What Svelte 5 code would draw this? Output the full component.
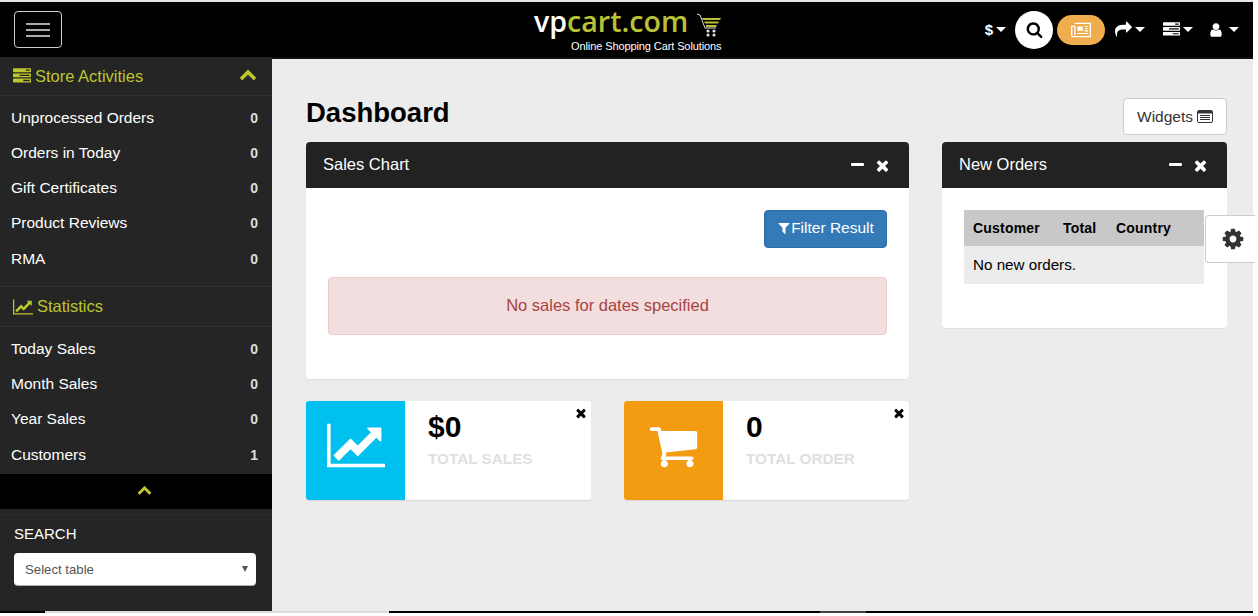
<script lang="ts">
  const activities = [
    { label: 'Unprocessed Orders', value: 0 },
    { label: 'Orders in Today', value: 0 },
    { label: 'Gift Certificates', value: 0 },
    { label: 'Product Reviews', value: 0 },
    { label: 'RMA', value: 0 }
  ];
  const statistics = [
    { label: 'Today Sales', value: 0 },
    { label: 'Month Sales', value: 0 },
    { label: 'Year Sales', value: 0 },
    { label: 'Customers', value: 1 }
  ];

  const tasks = 'M1024 1408h640v-128h-640v128zm-384-512h1024v-128h-1024v128zm640-512h384v-128h-384v128zm512 832v256q0 26-19 45t-45 19h-1664q-26 0-45-19t-19-45v-256q0-26 19-45t45-19h1664q26 0 45 19t19 45zm0-512v256q0 26-19 45t-45 19h-1664q-26 0-45-19t-19-45v-256q0-26 19-45t45-19h1664q26 0 45 19t19 45zm0-512v256q0 26-19 45t-45 19h-1664q-26 0-45-19t-19-45v-256q0-26 19-45t45-19h1664q26 0 45 19t19 45z';
  const chevron = 'M1683 1331l-166 165q-19 19-45 19t-45-19l-531-531-531 531q-19 19-45 19t-45-19l-166-165q-19-19-19-45.500t19-45.500l742-741q19-19 45-19t45 19l742 741q19 19 19 45.500t-19 45.500z';
  const times = 'M1490 1322q0 40-28 68l-136 136q-28 28-68 28t-68-28l-294-294-294 294q-28 28-68 28t-68-28l-136-136q-28-28-28-68t28-68l294-294-294-294q-28-28-28-68t28-68l136-136q28-28 68-28t68 28l294 294 294-294q28-28 68-28t68 28l136 136q28 28 28 68t-28 68l-294 294 294 294q28 28 28 68z';
  const lineChart = 'M2048 1536v128h-2048v-1536h128v1408h1920zm-128-1248v435q0 21-19.500 29.500t-35.500-7.500l-121-121-633 633q-10 10-23 10t-23-10l-233-233-416 416-192-192 585-585q10-10 23-10t23 10l233 233 464-464-121-121q-16-16-7.500-35.500t29.500-19.500h435q14 0 23 9t9 23z';
  const cart = 'M704 1536q0 52-38 90t-90 38-90-38-38-90 38-90 90-38 90 38 38 90zm896 0q0 52-38 90t-90 38-90-38-38-90 38-90 90-38 90 38 38 90zm128-1088v512q0 24-16.500 42.500t-40.500 21.500l-1044 122q13 60 13 70 0 16-24 64h920q26 0 45 19t19 45-19 45-45 19h-1024q-26 0-45-19t-19-45q0-11 8-31.500t16-36 21.500-40 15.500-29.500l-177-823h-204q-26 0-45-19t-19-45 19-45 45-19h256q16 0 28.500 6.500t19.500 15.500 13 24.500 8 26 5.500 29.500 4.500 26h1201q26 0 45 19t19 45z';
  const search = 'M1216 832q0-185-131.500-316.500t-316.500-131.500-316.500 131.500-131.500 316.500 131.500 316.500 316.500 131.500 316.500-131.500 131.500-316.500zm512 832q0 52-38 90t-90 38q-54 0-90-38l-343-342q-179 124-399 124-143 0-273.500-55.500t-225-150-150-225-55.500-273.500 55.500-273.500 150-225 225-150 273.500-55.500 273.500 55.500 225 150 150 225 55.500 273.500q0 220-124 399l343 343q37 37 37 90z';
  const cog = 'M1152 896q0-106-75-181t-181-75-181 75-75 181 75 181 181 75 181-75 75-181zm512-109v222q0 12-8 23t-20 13l-185 28q-19 54-39 91 35 50 107 138 10 12 10 25t-9 23q-27 37-99 108t-94 71q-12 0-26-9l-138-108q-44 23-91 38-16 136-29 186-7 28-36 28h-222q-14 0-24.500-8.500t-11.500-21.500l-28-184q-49-16-90-37l-141 107q-10 9-25 9-14 0-25-11-126-114-165-168-7-10-7-23 0-12 8-23 15-21 51-66.500t54-70.500q-27-50-41-99l-183-27q-13-2-21-12.500t-8-23.500v-222q0-12 8-23t19-13l186-28q14-46 39-92-40-57-107-138-10-12-10-24 0-10 9-23 26-36 98.500-107.500t94.500-71.500q13 0 26 10l138 107q44-23 91-38 16-136 29-186 7-28 36-28h222q14 0 24.500 8.500t11.500 21.500l28 184q49 16 90 37l142-107q9-9 24-9 13 0 25 10 129 119 165 170 7 8 7 22 0 12-8 23-15 21-51 66.500t-54 70.500q26 50 41 98l183 28q13 2 21 12.500t8 23.500z';
  const share = 'M1792 640q0 26-19 45l-512 512q-19 19-45 19t-45-19-19-45v-256h-224q-98 0-175.500 6t-154 21.500-133 42.500-105.500 69.500-80 101-48.500 138.500-17.500 181q0 55 5 123 0 6 2.500 23.500t2.500 26.500q0 15-8.500 25t-23.500 10q-16 0-28-17-7-9-13-22t-13.500-30-10.500-24q-127-285-127-451 0-199 53-333 162-403 875-403h224v-256q0-26 19-45t45-19 45 19l512 512q19 19 19 45z';
  const user = 'M1536 1399q0 109-62.500 187t-150.500 78h-854q-88 0-150.500-78t-62.500-187q0-85 8.500-160.500t31.500-152 58.500-131 94-89 134.500-34.500q131 128 313 128t313-128q76 0 134.500 34.500t94 89 58.500 131 31.500 152 8.500 160.500zm-256-887q0 159-112.500 271.500t-271.500 112.500-271.500-112.500-112.500-271.500 112.500-271.500 271.500-112.500 271.500 112.500 112.500 271.500z';
  const filter = 'M1595 295q17 41-14 70l-493 493v742q0 42-39 59-13 5-25 5-27 0-45-19l-256-256q-19-19-19-45v-486l-493-493q-31-29-14-70 17-39 59-39h1280q42 0 59 39z';
</script>

<div class="page">
  <header class="topbar">
    <button class="burger" aria-label="Menu"><span></span><span></span><span></span></button>

    <div class="logo">
      <div class="logo-top">
        <span class="logo-name"><span class="vp">vp</span>cart.com</span>
        <svg class="logo-cart" viewBox="0 0 26 24" width="26" height="24" fill="none">
          <path d="M1 1l3 1 5 13h11" stroke="#ddd" stroke-width="1" />
          <path d="M6 5h19l-1 2H7zM8 8.500h15l-1 2H9zM10 12h11l-1 2H10z" fill="#b9c232" />
          <circle cx="12" cy="18" r="1.600" fill="#ddd" />
          <circle cx="18" cy="18" r="1.600" fill="#ddd" />
          <circle cx="12" cy="22" r="1.600" fill="#ddd" />
          <circle cx="18" cy="22" r="1.600" fill="#ddd" />
        </svg>
      </div>
      <div class="tagline">Online Shopping Cart Solutions</div>
    </div>

    <nav class="tools">
      <span class="tool dollar">$<i class="caret"></i></span>
      <button class="round-search" aria-label="Search">
        <svg viewBox="0 0 1792 1792" width="17" height="17"><path d={search} fill="#000" /></svg>
      </button>
      <button class="news" aria-label="News">
        <svg viewBox="0 0 24 18" width="22" height="16" fill="none" stroke="#fff" stroke-width="1.500">
          <path d="M5 1.500h17.500v15H3A1.500 1.500 0 0 1 1.500 15V5H5v10" />
          <rect x="8" y="5" width="6" height="5" fill="#fff" stroke="none" />
          <path d="M16 5h4M16 7.500h4M16 10h4M8 13h12" stroke-width="1.200" />
        </svg>
      </button>
      <span class="tool share"><svg viewBox="0 0 1792 1792" width="17" height="17"><path d={share} fill="#fff" /></svg><i class="caret"></i></span>
      <span class="tool tasks"><svg viewBox="0 0 1792 1792" width="17" height="17"><path d={tasks} fill="#fff" /></svg><i class="caret"></i></span>
      <span class="tool user"><svg viewBox="0 0 1792 1792" width="16" height="16"><path d={user} fill="#fff" /></svg><i class="caret"></i></span>
    </nav>
  </header>

  <div class="body">
    <aside class="sidebar">
      <div class="side-head first">
        <svg viewBox="0 0 1792 1792" width="18" height="18"><path d={tasks} /></svg>
        <span>Store Activities</span>
        <svg class="chev" viewBox="0 0 1792 1792" width="18" height="18"><path d={chevron} /></svg>
      </div>
      <ul class="side-list">
        {#each activities as row}
          <li><span>{row.label}</span><b>{row.value}</b></li>
        {/each}
      </ul>

      <div class="side-head second">
        <svg viewBox="0 0 2048 1792" width="20" height="18"><path d={lineChart} /></svg>
        <span>Statistics</span>
      </div>
      <ul class="side-list">
        {#each statistics as row}
          <li><span>{row.label}</span><b>{row.value}</b></li>
        {/each}
      </ul>

      <div class="collapse">
        <svg viewBox="0 0 1792 1792" width="15" height="15"><path d={chevron} /></svg>
      </div>

      <div class="side-search">
        <div class="search-label">SEARCH</div>
        <div class="select-wrap">
          <select>
            <option>Select table</option>
          </select>
        </div>
      </div>
    </aside>

    <main class="main">
      <div class="title-row">
        <h1>Dashboard</h1>
        <button class="widgets">Widgets
          <svg viewBox="0 0 16 13" width="16" height="13">
            <rect x=".5" y=".5" width="15" height="12" rx="1.500" fill="none" stroke="#333" />
            <rect x="1" y="1" width="14" height="2.500" fill="#333" />
            <path d="M3 5.500h10M3 7.500h10M3 9.500h10" stroke="#333" stroke-width="1.100" />
          </svg>
        </button>
      </div>

      <div class="columns">
        <div class="left-col">
          <section class="panel">
            <div class="panel-head">
              <span>Sales Chart</span>
              <div class="panel-tools">
                <i class="minus"></i>
                <svg viewBox="0 0 1792 1792" width="17" height="17"><path d={times} fill="#fff" /></svg>
              </div>
            </div>
            <div class="sales-body">
              <div class="filter-row">
                <button class="filter"><svg viewBox="0 0 1792 1792" width="14" height="14"><path d={filter} fill="#fff" /></svg>Filter Result</button>
              </div>
              <div class="alert">No sales for dates specified</div>
            </div>
          </section>

          <div class="stats">
            <div class="stat">
              <div class="stat-icon blue">
                <svg viewBox="0 0 2048 1792" width="58" height="51"><path d={lineChart} fill="#fff" /></svg>
              </div>
              <div class="stat-text">
                <div class="stat-value">$0</div>
                <div class="stat-label">TOTAL SALES</div>
              </div>
              <svg class="stat-close" viewBox="0 0 1792 1792" width="14" height="14"><path d={times} fill="#000" /></svg>
            </div>
            <div class="stat">
              <div class="stat-icon orange">
                <svg viewBox="0 0 1792 1792" width="51" height="51"><path d={cart} fill="#fff" /></svg>
              </div>
              <div class="stat-text">
                <div class="stat-value">0</div>
                <div class="stat-label">TOTAL ORDER</div>
              </div>
              <svg class="stat-close" viewBox="0 0 1792 1792" width="14" height="14"><path d={times} fill="#000" /></svg>
            </div>
          </div>
        </div>

        <section class="panel orders">
          <div class="panel-head">
            <span>New Orders</span>
            <div class="panel-tools">
              <i class="minus"></i>
              <svg viewBox="0 0 1792 1792" width="17" height="17"><path d={times} fill="#fff" /></svg>
            </div>
          </div>
          <div class="orders-body">
            <table>
              <thead>
                <tr><th class="col-a">Customer</th><th class="col-b">Total</th><th>Country</th></tr>
              </thead>
              <tbody>
                <tr><td colspan="3">No new orders.</td></tr>
              </tbody>
            </table>
          </div>
        </section>
      </div>

      <button class="gear" aria-label="Settings">
        <svg viewBox="0 0 1792 1792" width="24" height="24"><path d={cog} fill="#333" /></svg>
      </button>
    </main>
  </div>

  <div class="scrollstrip"><i class="thumb-a"></i><i class="thumb-b"></i></div>
</div>

<style>
  :global(body) {
    margin: 0;
    background: #fff;
    overflow: hidden;
  }

  .page {
    width: 1253px;
    height: 613px;
    display: flex;
    flex-direction: column;
    font-family: "Liberation Sans", Arial, sans-serif;
    font-size: 15.500px;
    color: #000;
  }

  button {
    font-family: inherit;
    cursor: pointer;
  }

  .topbar {
    height: 55px;
    border-top: 2px solid #e4e4e4;
    background: #000;
    display: flex;
    align-items: center;
    padding: 0 14px;
    position: relative;
    flex: none;
  }

  .burger {
    width: 48px;
    height: 37px;
    background: none;
    border: 1px solid #ccc;
    border-radius: 4px;
    display: flex;
    flex-direction: column;
    justify-content: center;
    align-items: center;
    gap: 4px;
    padding: 0;
  }

  .burger span {
    width: 24px;
    height: 2px;
    background: #aaa;
  }

  .logo {
    position: absolute;
    left: 534px;
    top: 4px;
    width: 195px;
    color: #fff;
  }

  .logo-top {
    display: flex;
    align-items: flex-end;
    height: 30px;
  }

  .logo-name {
    font-family: "Open Sans", sans-serif;
    font-size: 28.600px;
    font-weight: 600;
    line-height: 30px;
    color: #b9c232;
  }

  .vp {
    color: #fff;
  }

  .logo-cart {
    margin-left: 8px;
    margin-bottom: -1px;
  }

  .tagline {
    margin: 3px 0 0 37px;
    font-size: 11px;
    white-space: nowrap;
    line-height: 14px;
    letter-spacing: -0.100px;
  }

  .tools {
    margin-left: auto;
    display: flex;
    align-items: center;
    color: #fff;
  }

  .tool {
    display: flex;
    align-items: center;
    gap: 3px;
  }

  .caret {
    display: inline-block;
    border-left: 5px solid transparent;
    border-right: 5px solid transparent;
    border-top: 5px solid #fff;
  }

  .dollar {
    font-size: 15px;
    font-weight: bold;
  }

  .round-search {
    width: 38px;
    height: 38px;
    border-radius: 50%;
    border: 0;
    background: #fff;
    display: flex;
    align-items: center;
    justify-content: center;
    margin-left: 9px;
    padding: 0;
  }

  .news {
    width: 48px;
    height: 30px;
    border-radius: 15px;
    border: 0;
    background: #f0ad4e;
    display: flex;
    align-items: center;
    justify-content: center;
    margin-left: 4px;
    padding: 0;
  }

  .share {
    margin-left: 10px;
  }

  .tasks {
    margin-left: 18px;
  }

  .user {
    margin-left: 15px;
    gap: 5px;
  }

  .body {
    flex: 1;
    display: flex;
    min-height: 0;
  }

  .sidebar {
    width: 272px;
    flex: none;
    background: #252525;
    color: #fff;
    display: flex;
    flex-direction: column;
  }

  .side-head {
    display: flex;
    align-items: center;
    gap: 4px;
    padding: 0 12px 0 13px;
    color: #bdc62e;
    font-size: 16.500px;
    border-bottom: 1px solid #2f2f2f;
  }

  .side-head.first {
    height: 38px;
  }

  .side-head.second {
    height: 39px;
    margin-top: 10px;
    border-top: 1px solid #2f2f2f;
  }

  .side-head svg {
    fill: #bdc62e;
  }

  .chev {
    margin-left: auto;
    margin-right: 3px;
    margin-bottom: 4px;
  }

  .side-list {
    list-style: none;
    margin: 0;
    padding: 4px 0 0;
  }

  .side-list li {
    height: 35.250px;
    display: flex;
    align-items: center;
    justify-content: space-between;
    padding: 0 14px 0 11px;
  }

  .side-list b {
    font-size: 14px;
    color: #ddd;
  }

  .collapse {
    height: 35px;
    box-sizing: border-box;
    padding: 0 0 5px 17px;
    margin-top: 2px;
    background: #000;
    display: flex;
    align-items: center;
    justify-content: center;
    fill: #bdc62e;
    flex: none;
  }

  .side-search {
    padding: 10px 16px 0 14px;
    border-top: 1px solid #2c2c2c;
    margin-top: 5px;
  }

  .search-label {
    font-size: 15px;
    line-height: 18px;
    margin-bottom: 10px;
  }

  .select-wrap {
    position: relative;
  }

  .select-wrap::after {
    content: "";
    position: absolute;
    right: 8px;
    top: 13px;
    border-left: 3px solid transparent;
    border-right: 3px solid transparent;
    border-top: 6px solid #555;
  }

  select {
    appearance: none;
    width: 100%;
    height: 33px;
    border: 0;
    border-bottom: 1px solid #aaa;
    border-radius: 4px;
    background: #fff;
    color: #555;
    font-family: inherit;
    font-size: 13.200px;
    padding: 0 11px;
    display: block;
  }

  .main {
    flex: 1;
    background: #ececec;
    border-top: 2px solid #111;
    padding: 0 26px 0 34px;
    position: relative;
    min-width: 0;
  }

  .title-row {
    display: flex;
    justify-content: space-between;
    align-items: flex-end;
    height: 76px;
    margin-bottom: 7px;
  }

  h1 {
    margin: 0 0 6px;
    font-size: 27.500px;
    line-height: 32px;
    font-weight: bold;
  }

  .widgets {
    width: 104px;
    height: 37px;
    background: #fff;
    border: 1px solid #ccc;
    border-radius: 4px;
    font-size: 15.500px;
    color: #333;
    padding: 0;
    display: flex;
    align-items: center;
    justify-content: center;
    gap: 4px;
  }

  .columns {
    display: flex;
    gap: 33px;
    align-items: flex-start;
  }

  .left-col {
    width: 603px;
    flex: none;
  }

  .panel {
    background: #fff;
    border-radius: 4px;
    box-shadow: 0 1px 1px rgba(0, 0, 0, 0.05);
  }

  .panel-head {
    height: 46px;
    box-sizing: border-box;
    background: #222;
    color: #fff;
    font-size: 16.500px;
    border-radius: 4px 4px 0 0;
    padding: 0 18px 2px 17px;
    display: flex;
    align-items: center;
    justify-content: space-between;
  }

  .panel-tools {
    display: flex;
    align-items: center;
    gap: 10px;
    margin-top: 3px;
  }

  .minus {
    display: block;
    width: 13px;
    height: 3.500px;
    background: #fff;
    border-radius: 1px;
    margin-bottom: 2px;
  }

  .sales-body {
    padding: 22px 22px 44px;
  }

  .filter-row {
    display: flex;
    justify-content: flex-end;
    margin-bottom: 29px;
  }

  .filter {
    width: 123px;
    height: 38px;
    background: #337ab7;
    border: 1px solid #2e6da4;
    border-radius: 4px;
    color: #fff;
    font-size: 15.500px;
    padding: 0 0 2px;
    display: flex;
    align-items: center;
    justify-content: center;
  }

  .alert {
    height: 58px;
    box-sizing: border-box;
    border: 1px solid #ebccd1;
    border-radius: 4px;
    background: #f2dede;
    color: #a94442;
    font-size: 16.500px;
    padding-bottom: 2px;
    display: flex;
    align-items: center;
    justify-content: center;
  }

  .stats {
    display: flex;
    gap: 33px;
    margin-top: 22px;
  }

  .stat {
    width: 285px;
    height: 99px;
    background: #fff;
    border-radius: 3px;
    display: flex;
    position: relative;
    overflow: hidden;
    box-shadow: 0 1px 1px rgba(0, 0, 0, 0.08);
  }

  .stat-icon {
    width: 99px;
    flex: none;
    box-sizing: border-box;
    padding-bottom: 10px;
    display: flex;
    align-items: center;
    justify-content: center;
  }

  .blue {
    background: #00c0ef;
  }

  .orange {
    background: #f39c12;
  }

  .stat-text {
    padding: 8px 0 0 23px;
  }

  .stat-value {
    font-size: 30px;
    font-weight: bold;
    line-height: 36px;
  }

  .stat-label {
    font-size: 15.300px;
    font-weight: bold;
    color: #e0e0e0;
    line-height: 18px;
    margin-top: 5px;
  }

  .stat-close {
    position: absolute;
    top: 5px;
    right: 3px;
  }

  .orders {
    width: 285px;
    flex: none;
  }

  .orders-body {
    padding: 22px 23px 44px 22px;
  }

  table {
    width: 100%;
    border-collapse: collapse;
    background: #ececec;
  }

  th {
    background: #c8c8c8;
    height: 36px;
    padding: 0 9px;
    font-size: 14px;
    letter-spacing: 0.200px;
    text-align: left;
  }

  .col-a {
    width: 72px;
  }

  .col-b {
    width: 35px;
  }

  td {
    height: 36px;
    padding: 0 9px 2px;
    font-size: 15.200px;
  }

  .gear {
    position: absolute;
    left: 933px;
    top: 156px;
    width: 50px;
    height: 48px;
    background: #fff;
    border: 1px solid #ccc;
    border-right: 0;
    border-radius: 4px 0 0 4px;
    padding: 0 0 0 4px;
    display: flex;
    align-items: center;
    justify-content: center;
  }

  .scrollstrip {
    height: 2px;
    background: #000;
    flex: none;
    position: relative;
  }

  .thumb-a {
    position: absolute;
    left: 45px;
    width: 344px;
    top: 0;
    bottom: 0;
    background: #ddd;
  }

  .thumb-b {
    position: absolute;
    left: 820px;
    width: 46px;
    top: 0;
    bottom: 0;
    background: #444;
  }
</style>
